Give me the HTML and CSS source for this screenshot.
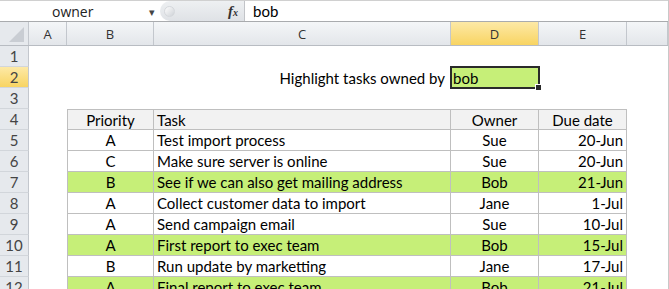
FILE: index.html
```html
<!DOCTYPE html>
<html lang="en">
  <head>
    <meta charset="UTF-8" />
    <title>Highlight tasks by owner</title>
    <link rel="stylesheet" href="styles.css">
  </head>
  <body>
    <!-- Formula Bar -->
    <div class="formula-bar">
      <div class="name-box">
        <span class="name">owner</span>
        <span class="drop">&#9662;</span>
      </div>
      <div class="fx-area">
        <span class="grip"></span>
        <span class="fx">f<small>x</small></span>
      </div>
      <div class="formula">bob</div>
    </div>

    <!-- Sheet -->
    <div class="sheet">
      <div class="row heads">
        <div class="corner"><span class="tri"></span></div>
        <div class="ch">A</div>
        <div class="ch">B</div>
        <div class="ch">C</div>
        <div class="ch active">D</div>
        <div class="ch">E</div>
        <div class="ch"></div>
      </div>

      <div class="row">
        <div class="rh">1</div>
        <div></div><div></div><div></div><div></div><div></div><div></div>
      </div>

      <div class="row">
        <div class="rh active">2</div>
        <div></div><div></div>
        <div class="label">Highlight tasks owned by</div>
        <div class="sel">bob</div>
        <div></div><div></div>
      </div>

      <div class="row">
        <div class="rh">3</div>
        <div></div><div></div><div></div><div></div><div></div><div></div>
      </div>

      <div class="row">
        <div class="rh">4</div>
        <div></div>
        <div class="t top first head center">Priority</div>
        <div class="t top head">Task</div>
        <div class="t top head center">Owner</div>
        <div class="t top head center">Due date</div>
        <div></div>
      </div>

      <div class="row">
        <div class="rh">5</div>
        <div></div>
        <div class="t first center">A</div>
        <div class="t">Test import process</div>
        <div class="t center">Sue</div>
        <div class="t right">20-Jun</div>
        <div></div>
      </div>

      <div class="row">
        <div class="rh">6</div>
        <div></div>
        <div class="t first center">C</div>
        <div class="t">Make sure server is online</div>
        <div class="t center">Sue</div>
        <div class="t right">20-Jun</div>
        <div></div>
      </div>

      <div class="row">
        <div class="rh">7</div>
        <div></div>
        <div class="t first center hl">B</div>
        <div class="t hl">See if we can also get mailing address</div>
        <div class="t center hl">Bob</div>
        <div class="t right hl">21-Jun</div>
        <div></div>
      </div>

      <div class="row">
        <div class="rh">8</div>
        <div></div>
        <div class="t first center">A</div>
        <div class="t">Collect customer data to import</div>
        <div class="t center">Jane</div>
        <div class="t right">1-Jul</div>
        <div></div>
      </div>

      <div class="row">
        <div class="rh">9</div>
        <div></div>
        <div class="t first center">A</div>
        <div class="t">Send campaign email</div>
        <div class="t center">Sue</div>
        <div class="t right">10-Jul</div>
        <div></div>
      </div>

      <div class="row">
        <div class="rh">10</div>
        <div></div>
        <div class="t first center hl">A</div>
        <div class="t hl">First report to exec team</div>
        <div class="t center hl">Bob</div>
        <div class="t right hl">15-Jul</div>
        <div></div>
      </div>

      <div class="row">
        <div class="rh">11</div>
        <div></div>
        <div class="t first center">B</div>
        <div class="t">Run update by marketting</div>
        <div class="t center">Jane</div>
        <div class="t right">17-Jul</div>
        <div></div>
      </div>

      <div class="row">
        <div class="rh">12</div>
        <div></div>
        <div class="t first center hl">A</div>
        <div class="t hl">Final report to exec team</div>
        <div class="t center hl">Bob</div>
        <div class="t right hl">21-Jul</div>
        <div></div>
      </div>
    </div>
  </body>
</html>
```

FILE: styles.css
```css
/* Global Reset */
* {
  margin: 0;
  padding: 0;
  box-sizing: border-box;
}

body {
  width: 669px;
  height: 289px;
  overflow: hidden;
  background-color: #fff;
  font-family: Lato, "Open Sans", sans-serif;
  color: #000;
  border-right: 1px solid #c8c8c8;
}

/* Formula Bar */
.formula-bar {
  display: flex;
  height: 22px;
  border-top: 1px solid #d0d0d0;
  border-bottom: 1px solid #a9abae;
}

.name-box {
  width: 160px;
  display: flex;
  align-items: center;
  padding-left: 52px;
  font-family: "Open Sans", sans-serif;
  font-size: 14px;
  color: #222;
}

.name-box .drop {
  margin-left: 56px;
  font-size: 11px;
  color: #444;
}

.fx-area {
  width: 85px;
  display: flex;
  align-items: center;
  justify-content: space-between;
  padding: 0 6px 0 4px;
  background: linear-gradient(#eef0f2, #dfe2e6);
  border-radius: 10px 0 0 10px;
  border-right: 1px solid #c2c4c8;
}

.fx-area .grip {
  width: 11px;
  height: 11px;
  border-radius: 50%;
  background: linear-gradient(135deg, #fdfdfd, #cfd3d8);
  border: 1px solid #d5d8dc;
}

.fx {
  font-family: "Liberation Serif", serif;
  font-style: italic;
  font-weight: bold;
  font-size: 15px;
  color: #333;
}

.fx small {
  font-size: 10px;
}

.formula {
  flex: 1;
  display: flex;
  align-items: center;
  padding-left: 8px;
  font-size: 15px;
}

/* Sheet Grid */
.row {
  display: grid;
  grid-template-columns: 29px 38px 87px 297px 88px 88px 1fr;
  height: 21px;
  font-size: 15px;
}

.row > div {
  display: flex;
  align-items: center;
  white-space: nowrap;
}

.row.heads {
  height: 24px;
  border-bottom: 1px solid #b8bcc2;
}

.corner {
  background: #e6e9ed;
  border-right: 1px solid #c3c7cd;
  position: relative;
}

.corner .tri {
  position: absolute;
  right: 4px;
  bottom: 3px;
  width: 0;
  height: 0;
  border-left: 15px solid transparent;
  border-bottom: 15px solid #c9cdd3;
}

.ch {
  justify-content: center;
  background: linear-gradient(#f4f6f8, #e3e6ea);
  border-right: 1px solid #c3c7cd;
  font-family: "Open Sans", sans-serif;
  font-size: 13px;
  color: #333;
}

.ch.active,
.rh.active {
  background: linear-gradient(#fde9a6, #f8d462);
}

.rh {
  justify-content: center;
  background: #e6e9ed;
  border-right: 1px solid #c3c7cd;
  border-bottom: 1px solid #d2d6db;
  font-size: 15px;
  color: #444;
}

/* Row 2 prompt */
.label {
  justify-content: flex-end;
  padding-right: 6px;
}

.sel {
  position: relative;
  background-color: #c6ef78;
  padding-left: 2px;
}

.sel::before {
  content: "";
  position: absolute;
  left: -1px;
  top: -1px;
  right: -1px;
  bottom: -1px;
  border: 2px solid #2a2a2a;
}

.sel::after {
  content: "";
  position: absolute;
  right: -3px;
  bottom: -3px;
  width: 5px;
  height: 5px;
  background-color: #2a2a2a;
  border: 1px solid #fff;
}

/* Task table */
.t {
  border-right: 1px solid #bfbfbf;
  border-bottom: 1px solid #bfbfbf;
  padding: 0 3px;
}

.t.first {
  border-left: 1px solid #bfbfbf;
}

.t.top {
  border-top: 1px solid #bfbfbf;
}

.t.head {
  background-color: #f2f2f2;
}

.t.center {
  justify-content: center;
}

.t.right {
  justify-content: flex-end;
}

.t.hl {
  background-color: #c6ef78;
}
```
